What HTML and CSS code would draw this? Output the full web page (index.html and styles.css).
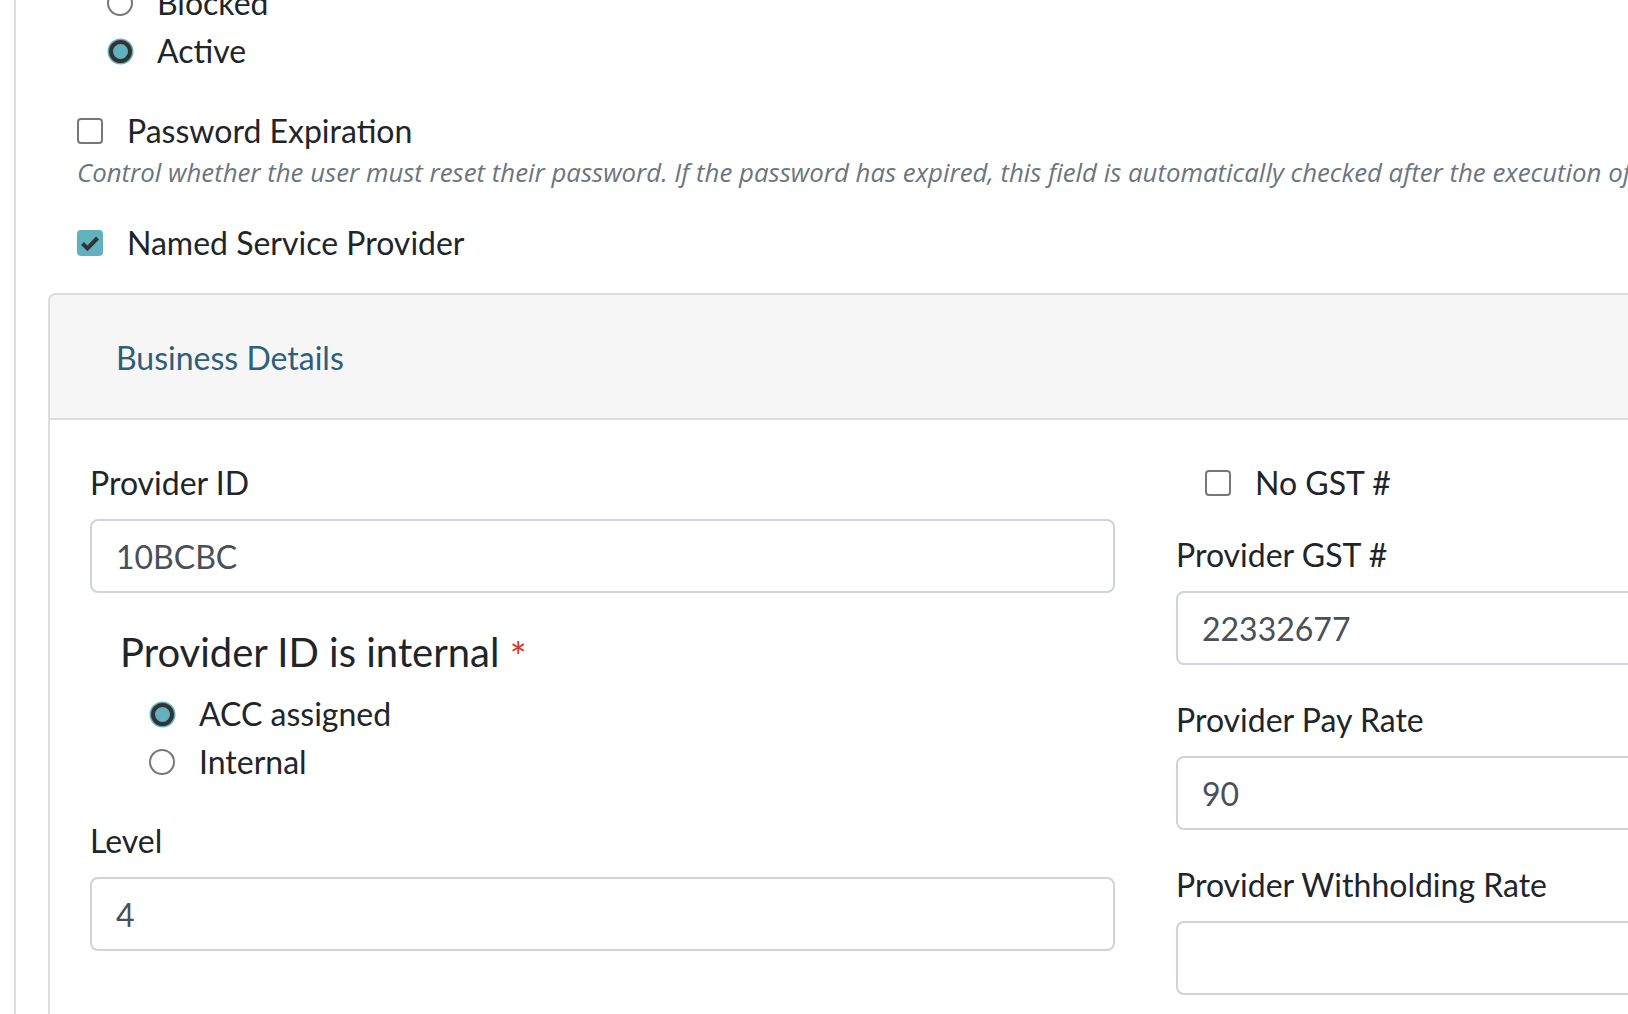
FILE: index.html
```html
<!DOCTYPE html>
<html>
<head>
	<title>Edit User</title>
	<link rel="stylesheet" href="styles.css">
</head>
<body>
	<div class="page">

		<!-- account status -->
		<div class="status-radios">
			<label class="check-row">
				<span class="radio"></span>
				<span>Blocked</span>
			</label>
			<label class="check-row">
				<span class="radio checked"></span>
				<span>Active</span>
			</label>
		</div>

		<div class="form-check">
			<label class="check-row">
				<span class="checkbox"></span>
				<span>Password Expiration</span>
			</label>
			<p class="help-text">Control whether the user must reset their password. If the password has expired, this field is automatically checked after the execution of the scheduled job.</p>
		</div>

		<div class="form-check">
			<label class="check-row">
				<span class="checkbox checked">
					<svg width="26" height="26" viewBox="0 0 26 26"><polyline points="5.5,13.5 10.5,18.5 20.5,8" fill="none" stroke="#333" stroke-width="4"/></svg>
				</span>
				<span>Named Service Provider</span>
			</label>
		</div>

		<!-- business details card -->
		<div class="card">
			<div class="card-header">Business Details</div>
			<div class="card-body">

				<div class="col">
					<div class="form-group">
						<label class="field-label">Provider ID</label>
						<div class="form-control">10BCBC</div>
					</div>

					<fieldset class="form-group">
						<legend>Provider ID is internal <span class="required">*</span></legend>
						<div class="legend-radios">
							<label class="check-row">
								<span class="radio checked"></span>
								<span>ACC assigned</span>
							</label>
							<label class="check-row">
								<span class="radio"></span>
								<span>Internal</span>
							</label>
						</div>
					</fieldset>

					<div class="form-group">
						<label class="field-label">Level</label>
						<div class="form-control">4</div>
					</div>
				</div>

				<div class="col">
					<label class="check-row gst-check">
						<span class="checkbox"></span>
						<span>No GST #</span>
					</label>

					<div class="form-group">
						<label class="field-label">Provider GST #</label>
						<div class="form-control">22332677</div>
					</div>

					<div class="form-group">
						<label class="field-label">Provider Pay Rate</label>
						<div class="form-control">90</div>
					</div>

					<div class="form-group">
						<label class="field-label">Provider Withholding Rate</label>
						<div class="form-control"></div>
					</div>
				</div>

			</div>
		</div>

	</div>
</body>
</html>
```
FILE: styles.css
```css
html, body {
	margin: 0;
	overflow: hidden;
	background: #fff;
}

body {
	font-family: "Lato", "Open Sans", sans-serif;
	font-size: 32px;
	line-height: 48px;
	color: #212529;
}

.page {
	margin-left: 14px;
	border-left: 2px solid #dedede;
	padding-left: 32px;
	min-height: 1014px;
	width: 2400px;
}

/* checkbox and radio rows */
.check-row {
	display: flex;
	align-items: center;
	height: 48px;
	gap: 24px;
	white-space: nowrap;
}

.radio {
	box-sizing: border-box;
	width: 26px;
	height: 26px;
	border-radius: 50%;
	border: 2px solid #777;
	background: #fff;
	flex: none;
}

.radio.checked {
	border: 4px solid #333;
	background: #62b1be;
	box-shadow: 0 0 0 1.5px #62b1be;
	width: 23px;
	height: 23px;
	margin: 0 1.5px;
}

.checkbox {
	box-sizing: border-box;
	width: 26px;
	height: 26px;
	border-radius: 4px;
	border: 2px solid #777;
	background: #fff;
	flex: none;
}

.checkbox.checked {
	border: none;
	background: #62b1be;
}

.checkbox svg {
	display: block;
}

.status-radios {
	margin: -21px 0 0 59px;
}

.form-check {
	margin: 32px 0 0 29px;
}

.help-text {
	margin: -2px 0 0;
	font-family: "Open Sans", sans-serif;
	font-style: italic;
	font-size: 25.8px;
	line-height: 38.4px;
	color: #6c757d;
	white-space: nowrap;
}

.form-check + .form-check {
	margin-top: 28px;
}

/* card */
.card {
	margin-top: 26px;
	width: 2250px;
	border: 2px solid #dcdcdc;
	border-radius: 8px;
}

.card-header {
	background: #f6f6f6;
	border-bottom: 2px solid #dcdcdc;
	border-radius: 6px 6px 0 0;
	padding: 39px 66px 36px;
	color: #2d5f7b;
}

.card-body {
	display: grid;
	grid-template-columns: 1025px 1025px;
	column-gap: 61px;
	padding: 39px 40px 40px;
}

.form-group {
	margin: 0 0 31px;
}

.field-label {
	display: block;
	margin-bottom: 12px;
}

.form-control {
	box-sizing: border-box;
	height: 74px;
	border: 2px solid #ced4da;
	border-radius: 8px;
	padding: 0 24px;
	line-height: 72px;
	color: #495057;
}

fieldset.form-group {
	border: none;
	padding: 0 0 0 30px;
}

legend {
	padding: 0;
	font-size: 40px;
	line-height: 56px;
	margin-bottom: 10px;
}

.required {
	position: relative;
	top: 5px;
	color: #d9362f;
}

.legend-radios {
	margin-left: 29px;
}

.gst-check {
	margin: 0 0 24px 29px;
}
```
